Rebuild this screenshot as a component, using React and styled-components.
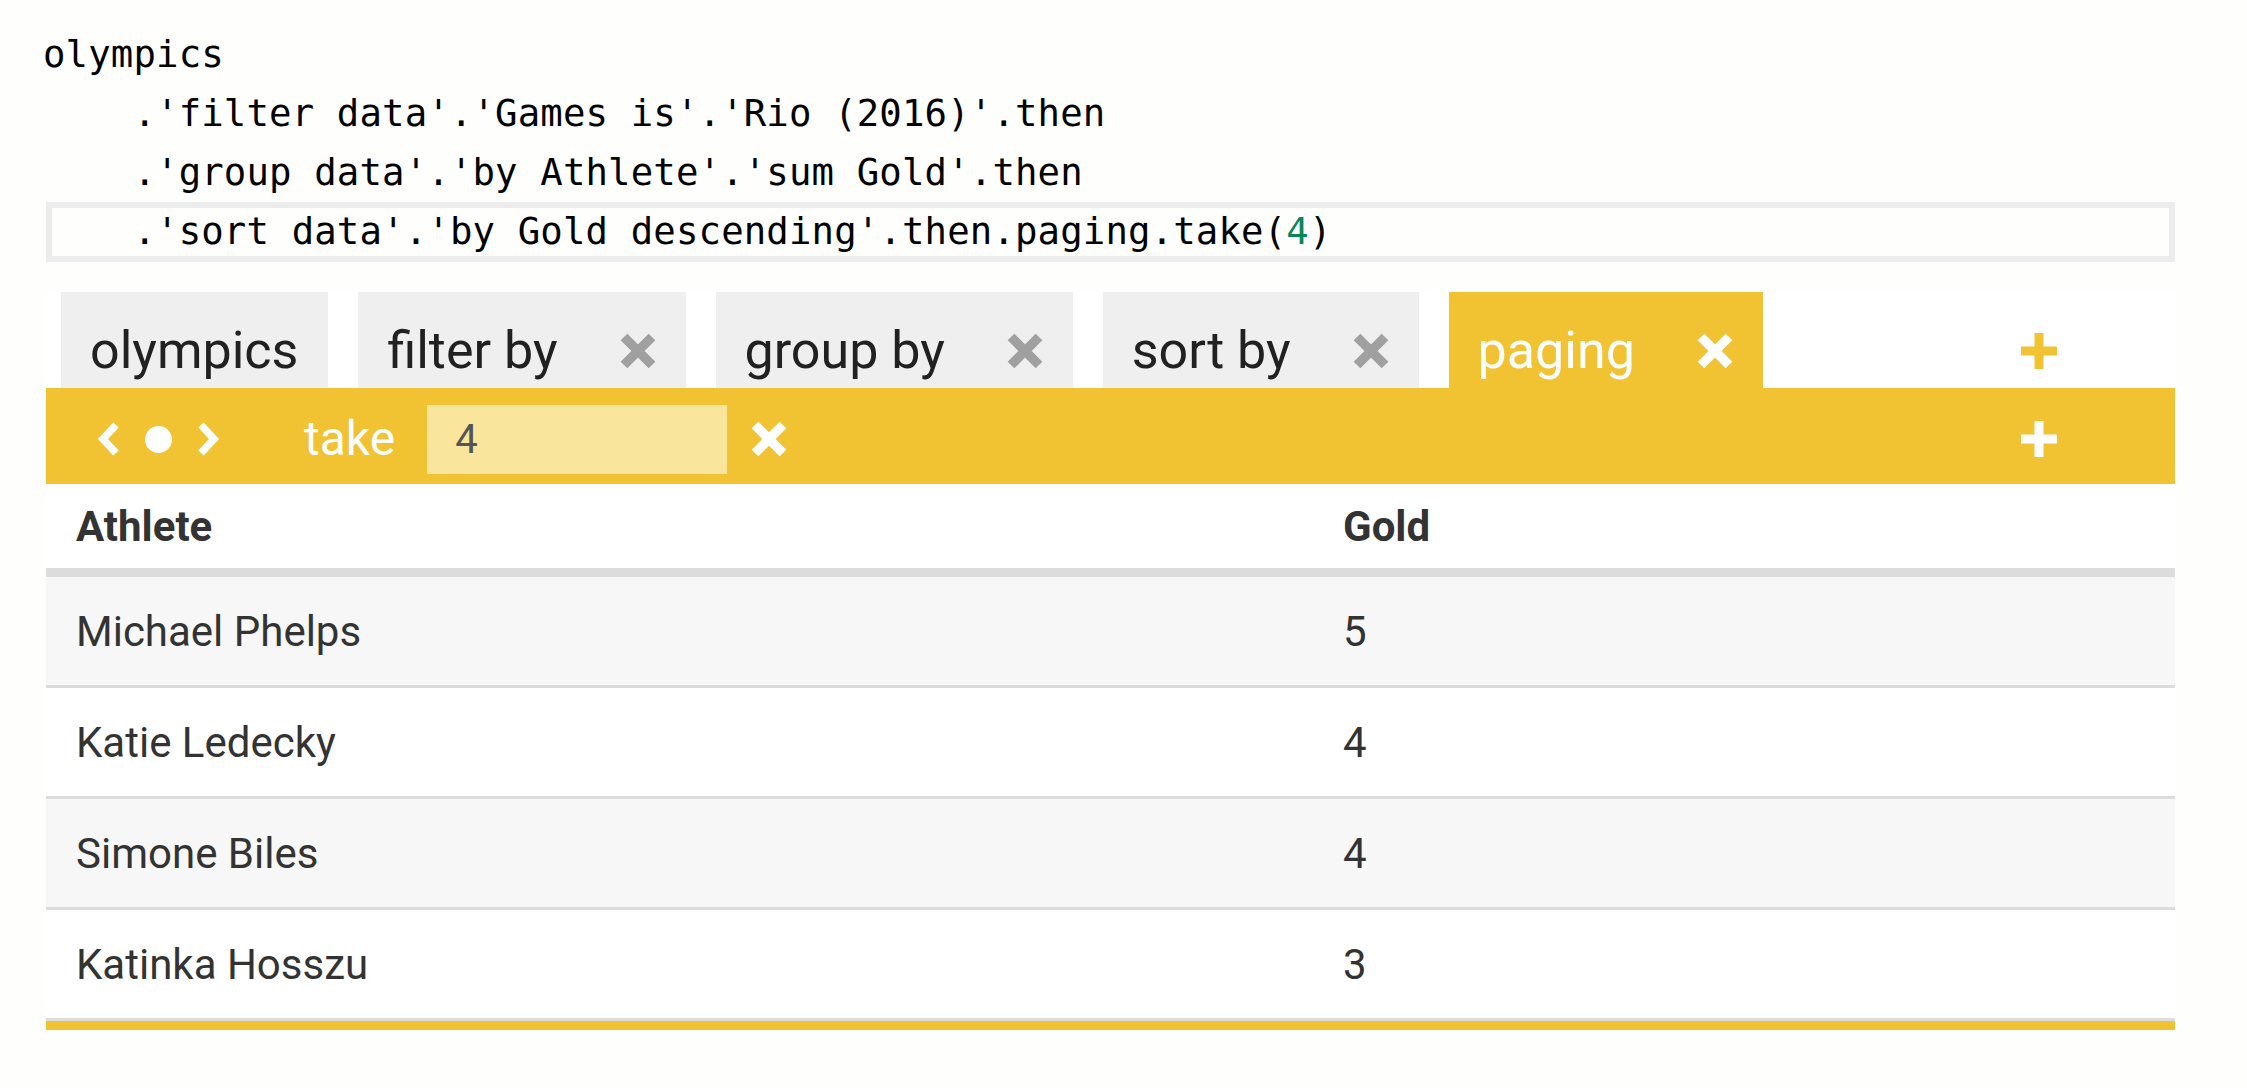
import React from "react";
import styled, { createGlobalStyle } from "styled-components";

const Global = createGlobalStyle`
  html, body { margin: 0; padding: 0; background: #fefefd; }
  body { font-family: Roboto, "Noto Sans", sans-serif; }
  *, *::before, *::after { box-sizing: border-box; }
`;

const YELLOW = "#f1c232";

const Page = styled.div`
  width: 2247px;
  height: 1088px;
  overflow: hidden;
`;

const Editor = styled.div`
  padding: 25px 0 0 43px;
  font-family: "DejaVu Sans Mono", "Liberation Mono", monospace;
  font-size: 37.3px;
  letter-spacing: 0.15px;
  line-height: 59px;
  color: #000;
`;

const CodeLine = styled.div`
  position: relative;
  height: 59px;
  white-space: pre;
  ${(p) =>
    p.$active &&
    `
    &::before {
      content: "";
      position: absolute;
      left: 3px;
      right: 72px;
      top: 0;
      height: 60px;
      border: 6px solid #ececec;
      pointer-events: none;
    }
  `}
`;

const Num = styled.span`
  color: #098658;
`;

const Panel = styled.div`
  margin: 31px 0 0 46px;
  width: 2129px;
  background: #fff;
`;

const TabRow = styled.div`
  display: flex;
  height: 96px;
  padding-left: 15px;
  gap: 30px;
`;

const Tab = styled.div`
  display: flex;
  align-items: flex-start;
  height: 96px;
  padding: 33px 30px 0 29px;
  background: ${(p) => (p.$active ? YELLOW : "#efefef")};
  color: ${(p) => (p.$active ? "#fff" : "#212121")};
`;

const TabLabel = styled.span`
  font-size: 52px;
  line-height: 52px;
  white-space: nowrap;
`;

const IconBox = styled.span`
  display: inline-flex;
  flex: none;
  width: ${(p) => p.$w || 36}px;
  height: ${(p) => p.$h || 36}px;
  margin-top: ${(p) => p.$mt || 0}px;
  margin-left: ${(p) => p.$ml || 0}px;
  margin-right: ${(p) => p.$mr || 0}px;
  svg { display: block; width: 100%; height: 100%; }
`;

const AddSlot = styled.div`
  margin-left: auto;
  margin-right: 118px;
  margin-top: 41px;
  height: 36px;
`;

const Bar = styled.div`
  display: flex;
  align-items: center;
  height: 96px;
  padding: 6px 0 0 50px;
  background: ${YELLOW};
  color: #fff;
`;

const Nav = styled.div`
  display: flex;
  align-items: center;
  gap: 26px;
`;

const Dot = styled.span`
  width: 27px;
  height: 27px;
  border-radius: 50%;
  background: #fff;
  flex: none;
`;

const TakeLabel = styled.span`
  margin-left: 83px;
  font-size: 48px;
  line-height: 48px;
`;

const TakeInput = styled.div`
  margin-left: 32px;
  width: 300px;
  height: 69px;
  padding-left: 28px;
  background: #f9e59b;
  color: #555;
  font-size: 40px;
  line-height: 69px;
`;

const BarAdd = styled.div`
  margin-left: auto;
  margin-right: 118px;
  display: flex;
`;

const Table = styled.div`
  border-bottom: 9px solid ${YELLOW};
  color: #333;
`;

const Row = styled.div`
  display: grid;
  grid-template-columns: 1267px 1fr;
  align-items: center;
  height: ${(p) => (p.$head ? 93 : 111)}px;
  border-bottom: ${(p) => (p.$head ? 9 : 3)}px solid #dcdcdc;
  background: ${(p) => (p.$alt ? "#f7f7f7" : "#fff")};
  font-size: 42px;
  font-weight: ${(p) => (p.$head ? 700 : 400)};
`;

const Cell = styled.div`
  padding-left: 30px;
`;

const Cross = ({ color }) => (
  <svg viewBox="0 0 36 36">
    <path d="M4 4L32 32M32 4L4 32" stroke={color} strokeWidth="9.5" fill="none" />
  </svg>
);

const Plus = ({ color }) => (
  <svg viewBox="0 0 36 36">
    <rect x="13.5" y="0" width="9" height="36" fill={color} />
    <rect x="0" y="13.5" width="36" height="9" fill={color} />
  </svg>
);

const Chevron = ({ dir }) => (
  <svg viewBox="0 0 23 34">
    <polyline
      points={dir === "left" ? "20,3 7,17 20,31" : "3,3 16,17 3,31"}
      stroke="#fff"
      strokeWidth="7.5"
      fill="none"
      strokeLinejoin="miter"
    />
  </svg>
);

const tabs = [
  { label: "olympics", closable: false },
  { label: "filter by", closable: true },
  { label: "group by", closable: true },
  { label: "sort by", closable: true },
  { label: "paging", closable: true, active: true },
];

const rows = [
  ["Michael Phelps", 5],
  ["Katie Ledecky", 4],
  ["Simone Biles", 4],
  ["Katinka Hosszu", 3],
];

export default function App() {
  return (
    <Page>
      <Global />
      <Editor>
        <CodeLine>olympics</CodeLine>
        <CodeLine>{"    .'filter data'.'Games is'.'Rio (2016)'.then"}</CodeLine>
        <CodeLine>{"    .'group data'.'by Athlete'.'sum Gold'.then"}</CodeLine>
        <CodeLine $active>
          {"    .'sort data'.'by Gold descending'.then.paging.take("}
          <Num>4</Num>
          {")"}
        </CodeLine>
      </Editor>
      <Panel>
        <TabRow>
          {tabs.map((t) => (
            <Tab key={t.label} $active={t.active}>
              <TabLabel>{t.label}</TabLabel>
              {t.closable && (
                <IconBox $ml={62} $mt={8}>
                  <Cross color={t.active ? "#fff" : "#a0a0a0"} />
                </IconBox>
              )}
            </Tab>
          ))}
          <AddSlot>
            <IconBox>
              <Plus color={YELLOW} />
            </IconBox>
          </AddSlot>
        </TabRow>
        <Bar>
          <Nav>
            <IconBox $w={23} $h={34}>
              <Chevron dir="left" />
            </IconBox>
            <Dot />
            <IconBox $w={23} $h={34}>
              <Chevron dir="right" />
            </IconBox>
          </Nav>
          <TakeLabel>take</TakeLabel>
          <TakeInput>4</TakeInput>
          <IconBox $ml={24}>
            <Cross color="#fff" />
          </IconBox>
          <BarAdd>
            <IconBox>
              <Plus color="#fff" />
            </IconBox>
          </BarAdd>
        </Bar>
        <Table>
          <Row $head>
            <Cell>Athlete</Cell>
            <Cell>Gold</Cell>
          </Row>
          {rows.map(([name, gold], i) => (
            <Row key={name} $alt={i % 2 === 0}>
              <Cell>{name}</Cell>
              <Cell>{gold}</Cell>
            </Row>
          ))}
        </Table>
      </Panel>
    </Page>
  );
}
